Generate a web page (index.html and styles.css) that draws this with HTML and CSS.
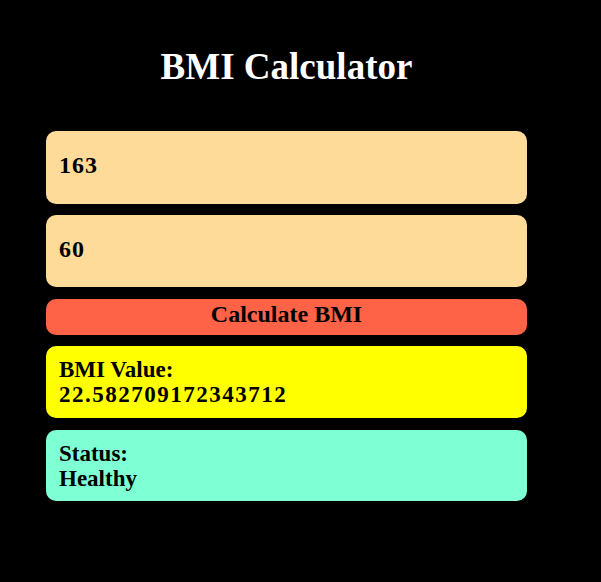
FILE: index.html
```html
<!DOCTYPE html>
<html>
<head>
<meta charset="utf-8">
<title>BMI Calculator</title>
<link rel="stylesheet" href="styles.css">
</head>
<body>
<div class="app">
  <h1 class="title">BMI Calculator</h1>
  <div class="form">
    <input class="field" type="text" value="163">
    <input class="field" type="text" value="60">
    <button class="calc">Calculate BMI</button>
    <div class="result result-value">BMI Value:<br><span class="num">22.582709172343712</span></div>
    <div class="result result-status">Status:<br>Healthy</div>
  </div>
</div>
</body>
</html>
```
FILE: styles.css
```css
html, body {
  margin: 0;
  padding: 0;
  background: #000;
}
body {
  font-family: "Liberation Serif", "Times New Roman", serif;
  font-weight: bold;
  color: #000;
}
.app {
  width: 481px;
  margin-left: 46px;
  padding-top: 46px;
}
.title {
  margin: 0;
  color: #fff;
  text-align: center;
  font-size: 37px;
  line-height: 41px;
  font-weight: bold;
}
.form {
  margin-top: 44px;
  display: flex;
  flex-direction: column;
  gap: 11px;
}
.field {
  box-sizing: border-box;
  width: 100%;
  height: 73px;
  padding: 0 13px 4px;
  border: none;
  outline: none;
  border-radius: 10px;
  background: #ffdb99;
  font-family: inherit;
  font-weight: bold;
  font-size: 24px;
  letter-spacing: 1px;
  color: #000;
}
.field + .field {
  height: 72px;
}
.calc {
  box-sizing: border-box;
  width: 100%;
  height: 36px;
  margin-top: 1px;
  padding: 0 0 5px;
  border: none;
  border-radius: 10px;
  background: #ff6347;
  font-family: inherit;
  font-weight: bold;
  font-size: 24px;
  line-height: 31px;
  color: #000;
}
.result {
  box-sizing: border-box;
  padding: 11px 13px;
  border-radius: 10px;
  font-size: 23px;
  line-height: 25px;
}
.result-value {
  height: 72px;
}
.result-value {
  background: #ffff00;
}
.result-status {
  background: #7fffd4;
  margin-top: 1px;
  height: 71px;
}
.num {
  letter-spacing: 1.5px;
}
```
